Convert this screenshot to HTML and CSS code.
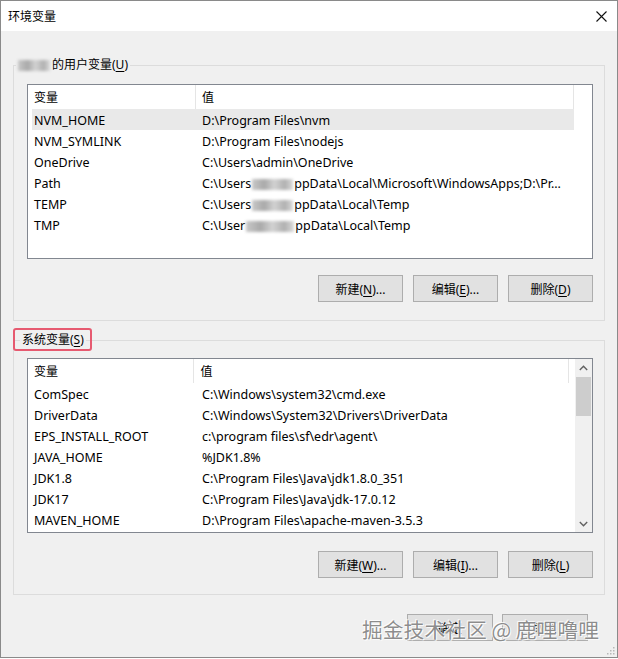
FILE: index.html
```html
<!DOCTYPE html>
<html lang="zh-CN">
<head>
<meta charset="utf-8">
<title>环境变量</title>
<link rel="stylesheet" href="styles.css">
</head>
<body>
<div class="window">
  <div class="titlebar">
    <span class="title">环境变量</span>
    <svg class="close" width="11" height="11" viewBox="0 0 11 11"><path d="M0.5 0.5 L10.5 10.5 M10.5 0.5 L0.5 10.5" stroke="#111" stroke-width="1.1" fill="none"/></svg>
  </div>
  <div class="content">
    <fieldset class="group group-user">
      <legend class="legend legend-user"><span class="smear smear-name"></span>的用户变量(<u>U</u>)</legend>
      <div class="list">
        <div class="list-main">
          <div class="list-head">
            <div class="hcell hcell-name">变量</div>
            <div class="hcell hcell-value">值</div>
            <div class="hcell hcell-rest"></div>
          </div>
          <div class="row row-selected"><span class="cell-name">NVM_HOME</span><span class="cell-value">D:\Program Files\nvm</span></div>
          <div class="row"><span class="cell-name">NVM_SYMLINK</span><span class="cell-value">D:\Program Files\nodejs</span></div>
          <div class="row"><span class="cell-name">OneDrive</span><span class="cell-value">C:\Users\admin\OneDrive</span></div>
          <div class="row"><span class="cell-name">Path</span><span class="cell-value">C:\Users<span class="smear smear-path"></span>ppData\Local\Microsoft\WindowsApps;D:\Pr...</span></div>
          <div class="row"><span class="cell-name">TEMP</span><span class="cell-value">C:\Users<span class="smear smear-path"></span>ppData\Local\Temp</span></div>
          <div class="row"><span class="cell-name">TMP</span><span class="cell-value">C:\User<span class="smear smear-path2"></span>ppData\Local\Temp</span></div>
        </div>
      </div>
      <div class="buttons">
        <button class="btn">新建(<u>N</u>)...</button>
        <button class="btn">编辑(<u>E</u>)...</button>
        <button class="btn">删除(<u>D</u>)</button>
      </div>
    </fieldset>

    <fieldset class="group group-system">
      <legend class="legend legend-system">系统变量(<u>S</u>)</legend>
      <div class="list">
        <div class="list-main">
          <div class="list-head">
            <div class="hcell hcell-name">变量</div>
            <div class="hcell hcell-value">值</div>
            <div class="hcell hcell-rest"></div>
          </div>
          <div class="row"><span class="cell-name">ComSpec</span><span class="cell-value">C:\Windows\system32\cmd.exe</span></div>
          <div class="row"><span class="cell-name">DriverData</span><span class="cell-value">C:\Windows\System32\Drivers\DriverData</span></div>
          <div class="row"><span class="cell-name">EPS_INSTALL_ROOT</span><span class="cell-value">c:\program files\sf\edr\agent\</span></div>
          <div class="row"><span class="cell-name">JAVA_HOME</span><span class="cell-value">%JDK1.8%</span></div>
          <div class="row"><span class="cell-name">JDK1.8</span><span class="cell-value">C:\Program Files\Java\jdk1.8.0_351</span></div>
          <div class="row"><span class="cell-name">JDK17</span><span class="cell-value">C:\Program Files\Java\jdk-17.0.12</span></div>
          <div class="row"><span class="cell-name">MAVEN_HOME</span><span class="cell-value">D:\Program Files\apache-maven-3.5.3</span></div>
        </div>
        <div class="scrollbar">
          <div class="sb-arrow"><svg width="9" height="6" viewBox="0 0 9 6"><path d="M0.8 5 L4.5 1.3 L8.2 5" stroke="#606060" stroke-width="1.4" fill="none"/></svg></div>
          <div class="sb-track"><div class="sb-thumb"></div></div>
          <div class="sb-arrow"><svg width="9" height="6" viewBox="0 0 9 6"><path d="M0.8 1 L4.5 4.7 L8.2 1" stroke="#606060" stroke-width="1.4" fill="none"/></svg></div>
        </div>
      </div>
      <div class="buttons">
        <button class="btn">新建(<u>W</u>)...</button>
        <button class="btn">编辑(<u>I</u>)...</button>
        <button class="btn">删除(<u>L</u>)</button>
      </div>
    </fieldset>

    <div class="dialog-buttons">
      <button class="btn btn-dialog">确定</button>
      <button class="btn btn-dialog">取消</button>
    </div>
  </div>
  <svg class="grip" width="8" height="8" viewBox="0 0 8 8"><g fill="#b8b8b8"><rect x="6" y="0" width="1.5" height="1.5"/><rect x="3" y="3" width="1.5" height="1.5"/><rect x="6" y="3" width="1.5" height="1.5"/><rect x="0" y="6" width="1.5" height="1.5"/><rect x="3" y="6" width="1.5" height="1.5"/><rect x="6" y="6" width="1.5" height="1.5"/></g></svg>
  <div class="watermark">掘金技术社区 @ 鹿哩噜哩</div>
</div>
</body>
</html>
```

FILE: styles.css
```css
* { box-sizing: border-box; }
html, body { margin: 0; padding: 0; background: #ffffff; }
body {
  font-family: "Noto Sans", "Noto Sans CJK SC", sans-serif;
  font-size: 12px;
  color: #000;
}
.window {
  position: relative;
  width: 618px;
  height: 658px;
  border: 1px solid #8a8a8a;
  background: #f0f0f0;
  overflow: hidden;
}
.titlebar {
  height: 30px;
  background: #fff;
  display: flex;
  align-items: center;
  justify-content: space-between;
  padding: 0 10px 0 7px;
}
.title {
  font-family: "Noto Sans CJK SC", sans-serif;
  font-size: 12px;
  line-height: 16px;
}
.close { display: block; margin-top: 1px; }
.content {
  padding-top: 26px;
}
.group {
  margin: 0 12px;
  padding: 11px 11px 18px 13px;
  border: 1px solid #dcdcdc;
  min-width: 0;
}
.group-system {
  margin-top: 11px;
  padding-top: 10px;
  padding-bottom: 16px;
}
.legend {
  position: relative;
  padding: 0 2px;
  line-height: 16px;
  font-family: "Noto Sans", "Noto Sans CJK SC", sans-serif;
  font-size: 12px;
}
.legend u { text-decoration-thickness: 1px; text-underline-offset: 2px; }
.legend-user { margin-left: -11px; }
.legend-system { margin-left: -7px; }
.legend-system::after {
  content: "";
  position: absolute;
  left: -7px;
  right: -6px;
  top: -4px;
  bottom: -3px;
  border: 2px solid #e65a70;
  border-radius: 3px;
}
.smear {
  display: inline-block;
  vertical-align: middle;
  height: 11px;
  background: linear-gradient(90deg, #c8c8c8, #a9a9a9 30%, #d2d2d2 55%, #b0b0b0 80%, #dadada);
  filter: blur(1.5px);
}
.smear-name { width: 32px; margin-right: 2px; }
.smear-path { width: 41px; margin: 0 1px; }
.smear-path2 { width: 48px; margin: 0 1px; }

.list {
  height: 175px;
  border: 1px solid #828790;
  background: #fff;
  display: flex;
  overflow: hidden;
}
.list-main { flex: 1; min-width: 0; }
.list-head {
  display: flex;
  height: 24px;
}
.hcell {
  display: flex;
  align-items: center;
  padding-left: 6px;
  font-family: "Noto Sans CJK SC", sans-serif;
  border-right: 1px solid #e5e5e5;
  line-height: 16px;
}
.hcell-name { width: 168px; }
.hcell-value { width: 378px; }
.hcell-rest { flex: 1; border-right: 0; }
.row {
  display: flex;
  align-items: center;
  height: 21px;
  padding-top: 2px;
  width: 542px;
  margin-left: 4px;
  white-space: nowrap;
  font-size: 12.5px;
}
.row-selected { background: #e9e9e9; }
.cell-name { width: 164px; padding-left: 2px; }
.cell-value { padding-left: 6px; }

.scrollbar {
  width: 17px;
  display: flex;
  flex-direction: column;
  background: #f0f0f0;
}
.sb-arrow {
  height: 17px;
  display: flex;
  align-items: center;
  justify-content: center;
}
.sb-track { flex: 1; }
.sb-thumb {
  height: 39px;
  margin: 1px 1px 0 1px;
  background: #cdcdcd;
}

.buttons {
  display: flex;
  justify-content: flex-end;
  gap: 10px;
  margin-top: 16px;
}
.group-system .buttons { margin-top: 18px; }
.btn {
  width: 85px;
  height: 27px;
  border: 1px solid #adadad;
  background: #e1e1e1;
  font-family: "Noto Sans", "Noto Sans CJK SC", sans-serif;
  font-size: 12px;
  color: #000;
  padding: 0;
  margin: 0;
}
.btn u { text-decoration-thickness: 1px; text-underline-offset: 2px; }
.dialog-buttons {
  display: flex;
  justify-content: flex-end;
  gap: 9px;
  padding-right: 29px;
  margin-top: 19px;
}
.btn-dialog { width: 86px; }
.grip { position: absolute; right: 2px; bottom: 2px; }
.watermark {
  position: absolute;
  right: 18px;
  bottom: 15px;
  font-family: "Noto Sans CJK SC", sans-serif;
  font-size: 20.8px;
  line-height: 26px;
  color: rgba(120, 120, 120, 0.85);
  text-shadow: 0 0 2px #fff, 0 0 1px #fff, 1px 1px 0 rgba(255,255,255,0.8), -1px -1px 0 rgba(255,255,255,0.8);
  white-space: nowrap;
}
```
